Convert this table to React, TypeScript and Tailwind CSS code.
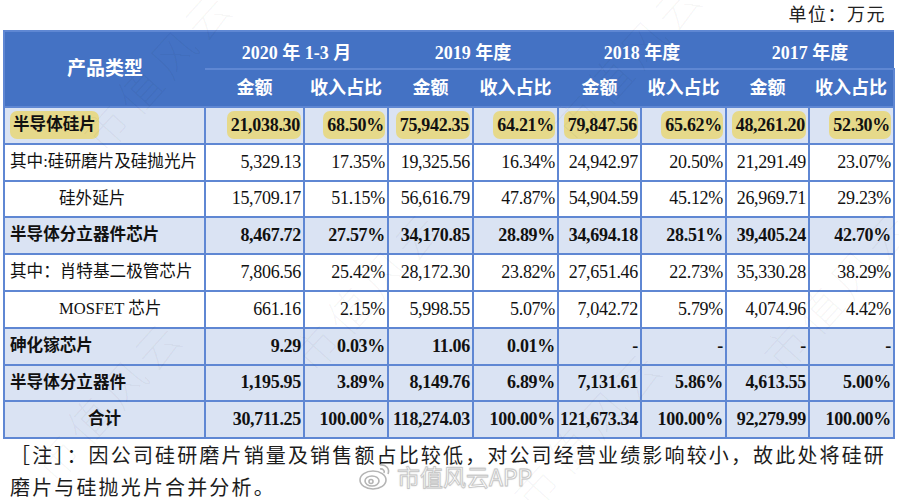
import React from 'react';

type Row = {
  name: string;
  values: string[];
  bold?: boolean;
  shaded?: boolean;
  highlight?: boolean;
  indent?: 'left' | 'inner' | 'center';
};

const rows: Row[] = [
  { name: '半导体硅片', values: ['21,038.30', '68.50%', '75,942.35', '64.21%', '79,847.56', '65.62%', '48,261.20', '52.30%'], bold: true, shaded: true, highlight: true },
  { name: '其中:硅研磨片及硅抛光片', values: ['5,329.13', '17.35%', '19,325.56', '16.34%', '24,942.97', '20.50%', '21,291.49', '23.07%'] },
  { name: '硅外延片', values: ['15,709.17', '51.15%', '56,616.79', '47.87%', '54,904.59', '45.12%', '26,969.71', '29.23%'], indent: 'inner' },
  { name: '半导体分立器件芯片', values: ['8,467.72', '27.57%', '34,170.85', '28.89%', '34,694.18', '28.51%', '39,405.24', '42.70%'], bold: true, shaded: true },
  { name: '其中：肖特基二极管芯片', values: ['7,806.56', '25.42%', '28,172.30', '23.82%', '27,651.46', '22.73%', '35,330.28', '38.29%'] },
  { name: 'MOSFET 芯片', values: ['661.16', '2.15%', '5,998.55', '5.07%', '7,042.72', '5.79%', '4,074.96', '4.42%'], indent: 'inner' },
  { name: '砷化镓芯片', values: ['9.29', '0.03%', '11.06', '0.01%', '-', '-', '-', '-'], bold: true, shaded: true },
  { name: '半导体分立器件', values: ['1,195.95', '3.89%', '8,149.76', '6.89%', '7,131.61', '5.86%', '4,613.55', '5.00%'], bold: true, shaded: true },
  { name: '合计', values: ['30,711.25', '100.00%', '118,274.03', '100.00%', '121,673.34', '100.00%', '92,279.99', '100.00%'], bold: true, shaded: true, indent: 'center' },
];

const widths = [201, 99, 84, 85, 85, 83, 85, 83, 85];
const years = ['2020 年 1-3 月', '2019 年度', '2018 年度', '2017 年度'];

// faint diagonal watermark positions
const marks = [
  { left: 90, top: 110 },
  { left: 560, top: 100 },
  { left: 300, top: 330 },
  { left: 770, top: 330 },
  { left: 40, top: 440 },
  { left: 520, top: 470 },
];

function WeiboLogo() {
  return (
    <svg width="36" height="30" viewBox="0 0 36 30" fill="none" stroke="#b5b5b5" strokeWidth="1.6">
      <ellipse cx="15" cy="19" rx="13" ry="9" />
      <ellipse cx="14" cy="20" rx="7" ry="5" />
      <circle cx="13" cy="20.5" r="2" />
      <path d="M22 4 C28 3 32 8 30 13" />
      <path d="M22 8 C25 7.5 27 10 26 12" />
    </svg>
  );
}

export default function App() {
  return (
    <div className="relative w-[899px] h-[500px] overflow-hidden bg-white text-[#111] font-['Liberation_Serif','Noto_Sans_CJK_SC',serif]">
      {/* Unit */}
      <div className="flex h-[30px] items-center justify-end pr-[13px] text-[18px] tracking-[1.5px] text-[#222]">
        单位：万元
      </div>

      {/* Table */}
      <table className="ml-[3px] w-[890px] table-fixed border-collapse text-[18px]">
        <colgroup>
          {widths.map((w, i) => (
            <col key={i} style={{ width: w }} />
          ))}
        </colgroup>
        <thead>
          <tr className="h-[38px] bg-[#4472c4] text-white">
            <th rowSpan={2} className="border-2 border-[#5f87d3] border-r-0 text-[19px] font-bold">
              产品类型
            </th>
            {years.map((y) => (
              <th key={y} colSpan={2} className="border-y-2 border-[#5f87d3] pt-[6px] font-bold">
                {y}
              </th>
            ))}
          </tr>
          <tr className="h-[38px] bg-[#4472c4] text-white">
            {years.map((y) => (
              <React.Fragment key={y}>
                <th className="border-b-2 border-[#5f87d3] font-bold">金额</th>
                <th className="border-b-2 border-[#5f87d3] font-bold last:border-r-2">收入占比</th>
              </React.Fragment>
            ))}
          </tr>
        </thead>
        <tbody>
          {rows.map((r) => (
            <tr key={r.name} className={`h-[36.8px] ${r.shaded ? 'bg-[#dae3f3]' : 'bg-white'} ${r.bold ? 'font-bold' : ''}`}>
              <td
                className={`border-2 border-[#5f87d3] whitespace-nowrap text-[16.6px] ${
                  r.indent === 'inner' ? 'pl-[54px]' : r.indent === 'center' ? 'text-center' : 'pl-[5px]'
                }`}
              >
                {r.highlight ? (
                  <span className="inline-block rounded-[7px] bg-[#e6d98a] px-[3px] leading-[28px]">{r.name}</span>
                ) : (
                  r.name
                )}
              </td>
              {r.values.map((v, i) => (
                <td key={i} className="border-2 border-[#5f87d3] pr-[2px] text-right whitespace-nowrap tracking-[-0.3px]">
                  {r.highlight ? (
                    <span className="inline-block rounded-[7px] bg-[#e6d98a] pl-[4px] pr-[1px] leading-[28px]">{v}</span>
                  ) : (
                    v
                  )}
                </td>
              ))}
            </tr>
          ))}
        </tbody>
      </table>

      {/* Note */}
      <div className="pl-[10px] pt-[1px] text-[20px] leading-[32px] tracking-[2.15px] text-[#1c1c1c]">
        <p className="whitespace-nowrap">［注］：因公司硅研磨片销量及销售额占比较低，对公司经营业绩影响较小，故此处将硅研</p>
        <p className="whitespace-nowrap">磨片与硅抛光片合并分析。</p>
      </div>

      {/* Watermarks */}
      {marks.map((m, i) => (
        <span
          key={i}
          className="pointer-events-none absolute origin-left -rotate-[48deg] whitespace-nowrap font-['Noto_Sans_CJK_SC',sans-serif] text-[44px] font-thin tracking-[6px] text-black/[0.05]"
          style={{ left: m.left, top: m.top }}
        >
          市值风云
        </span>
      ))}

      <div className="pointer-events-none absolute left-[358px] top-[461px] flex items-center gap-[3px]">
        <WeiboLogo />
        <span className="font-['Noto_Sans_CJK_SC',sans-serif] text-[23px] leading-none text-white [-webkit-text-stroke:0.8px_#c4c4c4] [text-shadow:0_0_2px_#bbb]">
          市值风云APP
        </span>
      </div>
    </div>
  );
}
